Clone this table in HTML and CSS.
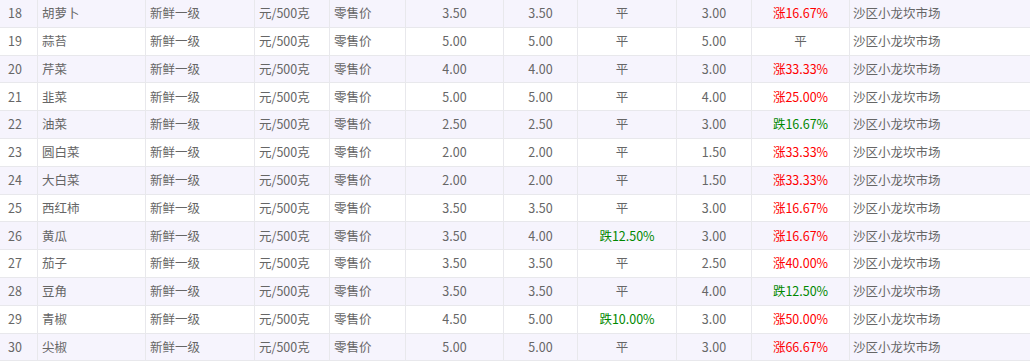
FILE: index.html
```html
<!DOCTYPE html>
<html lang="zh-CN">
<head>
<meta charset="utf-8">
<title>蔬菜价格</title>
<link rel="stylesheet" href="styles.css">
</head>
<body>
<div class="table">
  <div class="row odd"><div class="c c1">18</div><div class="c">胡萝卜</div><div class="c">新鲜一级</div><div class="c">元/500克</div><div class="c">零售价</div><div class="c num">3.50</div><div class="c num">3.50</div><div class="c num"><span class="flat">平</span></div><div class="c num">3.00</div><div class="c num up">涨16.67%</div><div class="c last">沙区小龙坎市场</div></div>
  <div class="row"><div class="c c1">19</div><div class="c">蒜苔</div><div class="c">新鲜一级</div><div class="c">元/500克</div><div class="c">零售价</div><div class="c num">5.00</div><div class="c num">5.00</div><div class="c num"><span class="flat">平</span></div><div class="c num">5.00</div><div class="c num">平</div><div class="c last">沙区小龙坎市场</div></div>
  <div class="row odd"><div class="c c1">20</div><div class="c">芹菜</div><div class="c">新鲜一级</div><div class="c">元/500克</div><div class="c">零售价</div><div class="c num">4.00</div><div class="c num">4.00</div><div class="c num"><span class="flat">平</span></div><div class="c num">3.00</div><div class="c num up">涨33.33%</div><div class="c last">沙区小龙坎市场</div></div>
  <div class="row"><div class="c c1">21</div><div class="c">韭菜</div><div class="c">新鲜一级</div><div class="c">元/500克</div><div class="c">零售价</div><div class="c num">5.00</div><div class="c num">5.00</div><div class="c num"><span class="flat">平</span></div><div class="c num">4.00</div><div class="c num up">涨25.00%</div><div class="c last">沙区小龙坎市场</div></div>
  <div class="row odd"><div class="c c1">22</div><div class="c">油菜</div><div class="c">新鲜一级</div><div class="c">元/500克</div><div class="c">零售价</div><div class="c num">2.50</div><div class="c num">2.50</div><div class="c num"><span class="flat">平</span></div><div class="c num">3.00</div><div class="c num down">跌16.67%</div><div class="c last">沙区小龙坎市场</div></div>
  <div class="row"><div class="c c1">23</div><div class="c">圆白菜</div><div class="c">新鲜一级</div><div class="c">元/500克</div><div class="c">零售价</div><div class="c num">2.00</div><div class="c num">2.00</div><div class="c num"><span class="flat">平</span></div><div class="c num">1.50</div><div class="c num up">涨33.33%</div><div class="c last">沙区小龙坎市场</div></div>
  <div class="row odd"><div class="c c1">24</div><div class="c">大白菜</div><div class="c">新鲜一级</div><div class="c">元/500克</div><div class="c">零售价</div><div class="c num">2.00</div><div class="c num">2.00</div><div class="c num"><span class="flat">平</span></div><div class="c num">1.50</div><div class="c num up">涨33.33%</div><div class="c last">沙区小龙坎市场</div></div>
  <div class="row"><div class="c c1">25</div><div class="c">西红柿</div><div class="c">新鲜一级</div><div class="c">元/500克</div><div class="c">零售价</div><div class="c num">3.50</div><div class="c num">3.50</div><div class="c num"><span class="flat">平</span></div><div class="c num">3.00</div><div class="c num up">涨16.67%</div><div class="c last">沙区小龙坎市场</div></div>
  <div class="row odd"><div class="c c1">26</div><div class="c">黄瓜</div><div class="c">新鲜一级</div><div class="c">元/500克</div><div class="c">零售价</div><div class="c num">3.50</div><div class="c num">4.00</div><div class="c num down">跌12.50%</div><div class="c num">3.00</div><div class="c num up">涨16.67%</div><div class="c last">沙区小龙坎市场</div></div>
  <div class="row"><div class="c c1">27</div><div class="c">茄子</div><div class="c">新鲜一级</div><div class="c">元/500克</div><div class="c">零售价</div><div class="c num">3.50</div><div class="c num">3.50</div><div class="c num"><span class="flat">平</span></div><div class="c num">2.50</div><div class="c num up">涨40.00%</div><div class="c last">沙区小龙坎市场</div></div>
  <div class="row odd"><div class="c c1">28</div><div class="c">豆角</div><div class="c">新鲜一级</div><div class="c">元/500克</div><div class="c">零售价</div><div class="c num">3.50</div><div class="c num">3.50</div><div class="c num"><span class="flat">平</span></div><div class="c num">4.00</div><div class="c num down">跌12.50%</div><div class="c last">沙区小龙坎市场</div></div>
  <div class="row"><div class="c c1">29</div><div class="c">青椒</div><div class="c">新鲜一级</div><div class="c">元/500克</div><div class="c">零售价</div><div class="c num">4.50</div><div class="c num">5.00</div><div class="c num down">跌10.00%</div><div class="c num">3.00</div><div class="c num up">涨50.00%</div><div class="c last">沙区小龙坎市场</div></div>
  <div class="row odd"><div class="c c1">30</div><div class="c">尖椒</div><div class="c">新鲜一级</div><div class="c">元/500克</div><div class="c">零售价</div><div class="c num">5.00</div><div class="c num">5.00</div><div class="c num"><span class="flat">平</span></div><div class="c num">3.00</div><div class="c num up">涨66.67%</div><div class="c last">沙区小龙坎市场</div></div>
</div>
</body>
</html>
```

FILE: styles.css
```css
html, body {
  margin: 0;
  padding: 0;
  background: #ffffff;
}

body {
  font-family: "Noto Sans CJK SC", "Noto Sans", sans-serif;
  font-size: 12.5px;
  color: #666666;
}

.table {
  width: 1030px;
}

.row {
  display: grid;
  grid-template-columns: 38px 108px 109px 75px 76px 98px 74px 99px 75px 98px 180px;
  height: 27.8px;
  box-sizing: border-box;
  border-bottom: 1px solid #e8e8ec;
  background: #ffffff;
}

.row.odd {
  background: #f6f4fd;
}

.c {
  box-sizing: border-box;
  border-right: 1px solid #e8e8ec;
  padding-left: 4px;
  display: flex;
  align-items: center;
  white-space: nowrap;
  line-height: 1;
}

.c1 {
  padding-left: 8px;
}

.c.last {
  border-right: none;
  padding-left: 3px;
}

.num {
  justify-content: center;
  padding-left: 0;
}

.flat {
  padding-right: 10px;
}

.up {
  color: #ff0000;
}

.down {
  color: #008800;
}
```
